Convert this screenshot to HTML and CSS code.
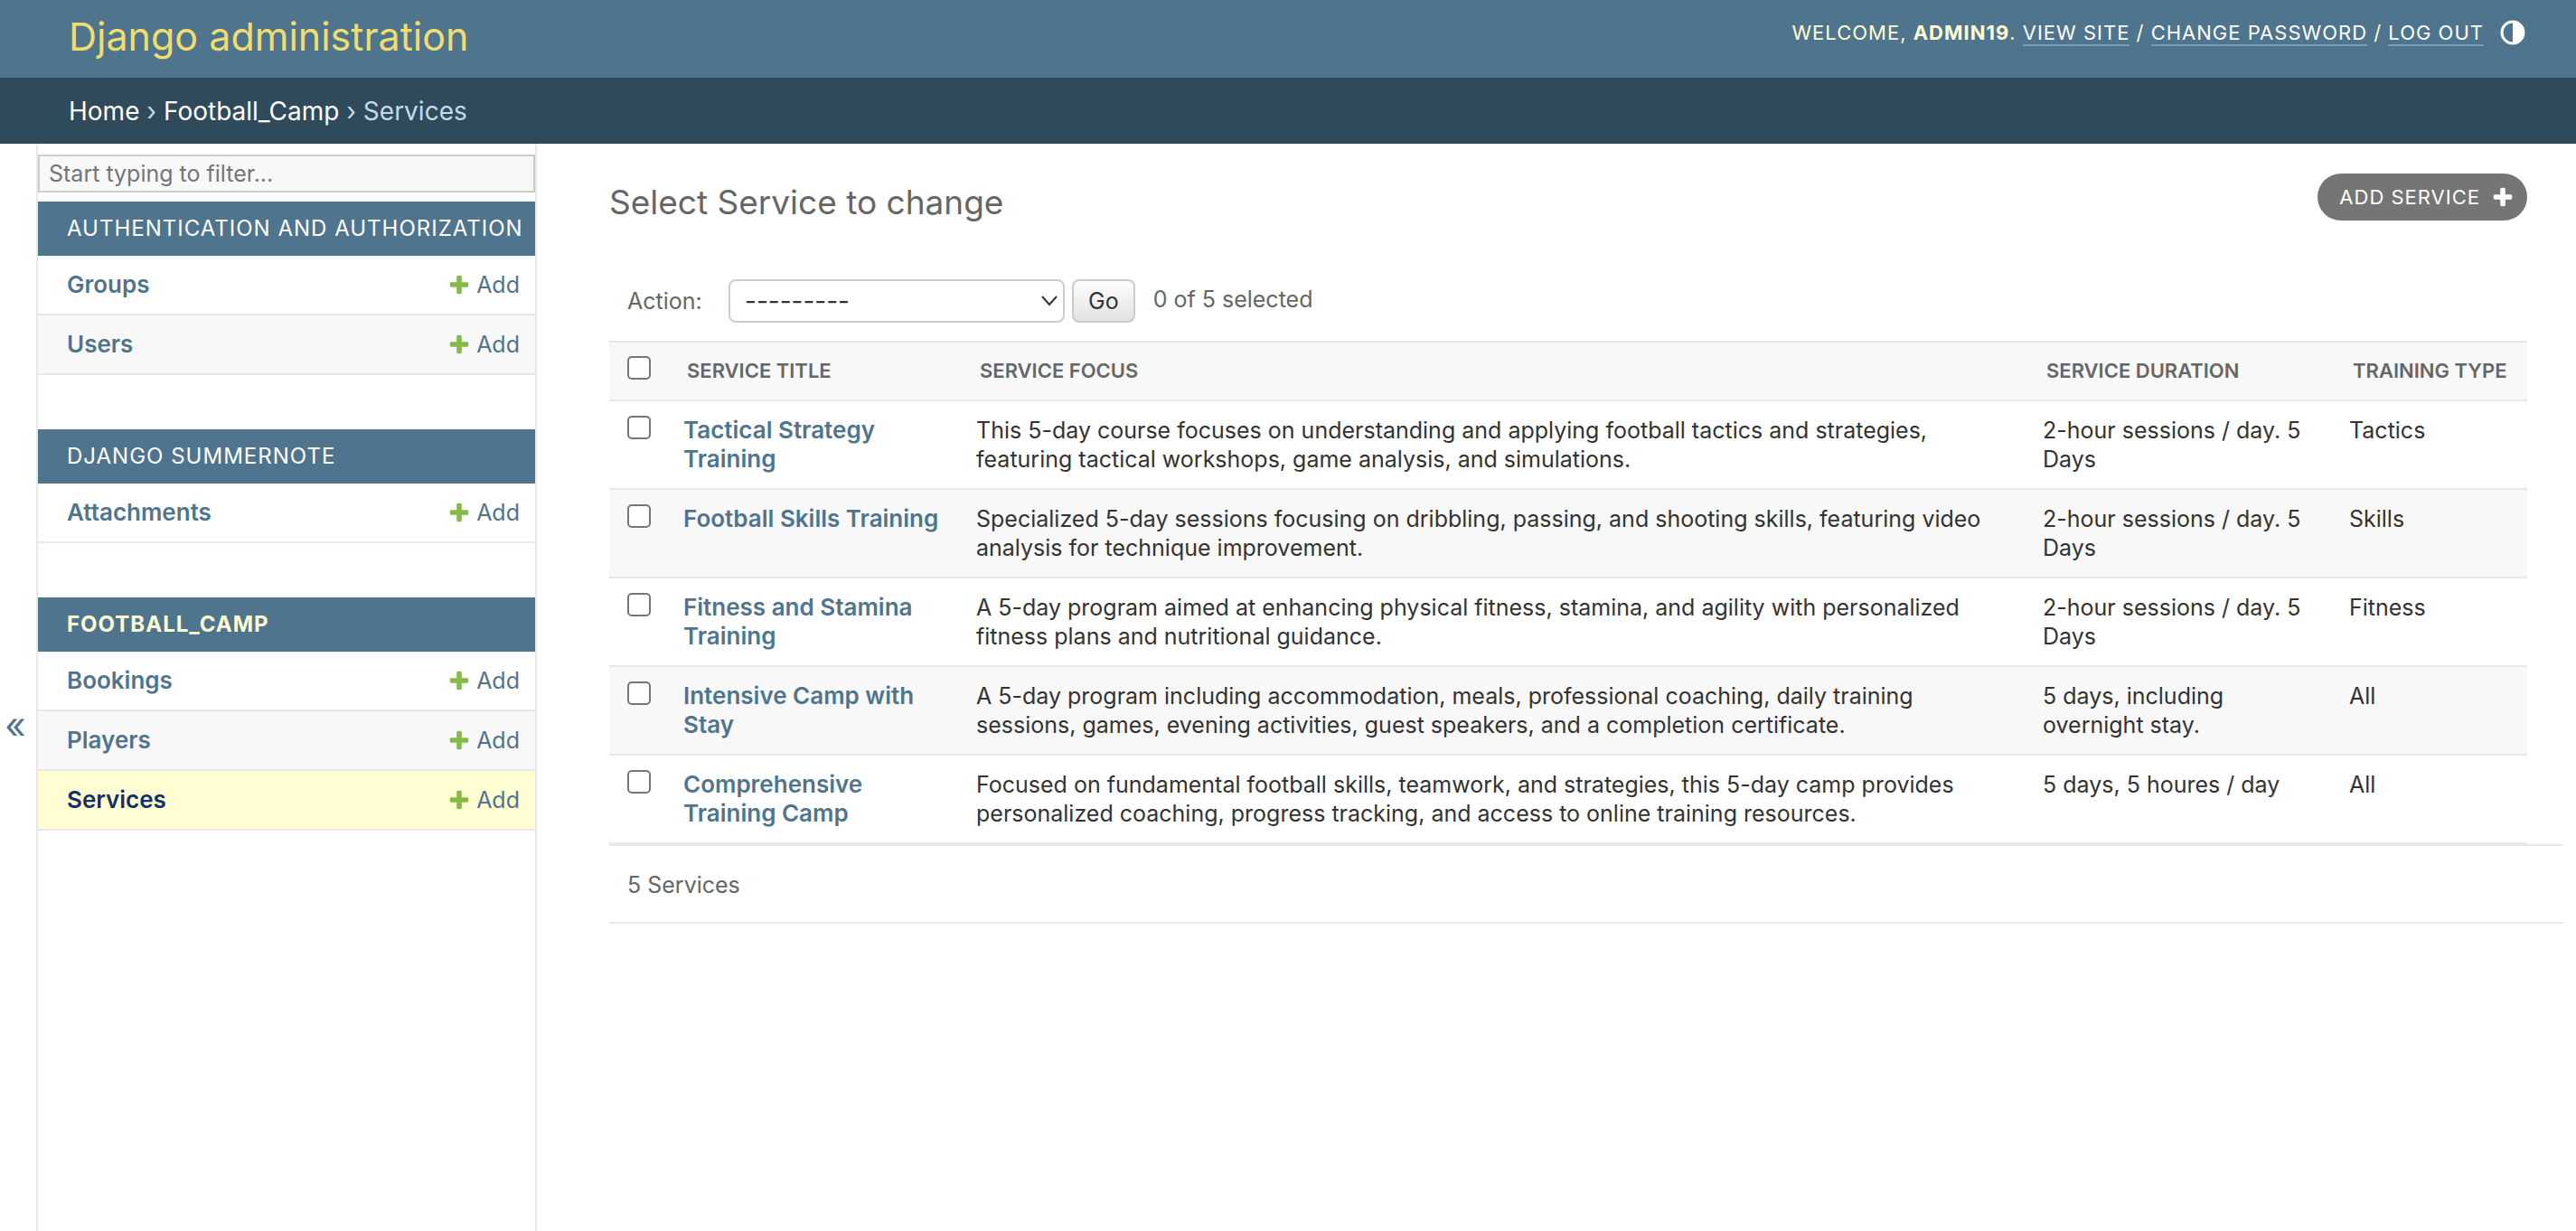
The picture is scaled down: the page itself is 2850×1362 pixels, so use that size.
FILE: index.html
```html
<!DOCTYPE html>
<html lang="en">
<head>
<meta charset="utf-8">
<meta name="viewport" content="width=device-width, initial-scale=1">
<title>Select Service to change | Django administration</title>
<link rel="stylesheet" href="styles.css">
</head>
<body>
<svg width="0" height="0" class="sprite" aria-hidden="true">
  <symbol id="plus" viewBox="0 0 1792 1792"><path d="M1600 796v192q0 40-28 68t-68 28h-416v416q0 40-28 68t-68 28h-192q-40 0-68-28t-28-68v-416h-416q-40 0-68-28t-28-68v-192q0-40 28-68t68-28h416v-416q0-40 28-68t68-28h192q40 0 68 28t28 68v416h416q40 0 68 28t28 68z"/></symbol>
</svg>

<header class="header">
  <div class="branding"><a href="#">Django administration</a></div>
  <div class="user-tools">
    <span>Welcome, <strong>admin19</strong>. <a href="#">View site</a> / <a href="#">Change password</a> / <a href="#">Log out</a></span>
    <button type="button" class="theme-toggle" aria-label="Toggle theme">
      <svg viewBox="0 0 28 28"><circle cx="14" cy="14" r="12" fill="none" stroke="currentColor" stroke-width="3"/><path d="M14 2a12 12 0 0 1 0 24z" fill="currentColor"/></svg>
    </button>
  </div>
</header>

<nav class="breadcrumbs" aria-label="Breadcrumbs"><a href="#">Home</a> › <a href="#">Football_Camp</a> › Services</nav>

<div class="main">
  <button type="button" class="nav-toggle" aria-label="Toggle navigation">«</button>

  <nav class="sidebar" aria-label="Sidebar">
    <input type="search" class="nav-filter" placeholder="Start typing to filter..." aria-label="Filter navigation items">

    <section class="module">
      <h2><a href="#">Authentication and Authorization</a></h2>
      <ul>
        <li><a class="model" href="#">Groups</a><a class="add" href="#"><svg><use href="#plus"/></svg>Add</a></li>
        <li><a class="model" href="#">Users</a><a class="add" href="#"><svg><use href="#plus"/></svg>Add</a></li>
      </ul>
    </section>

    <section class="module">
      <h2><a href="#">Django Summernote</a></h2>
      <ul>
        <li><a class="model" href="#">Attachments</a><a class="add" href="#"><svg><use href="#plus"/></svg>Add</a></li>
      </ul>
    </section>

    <section class="module current-app">
      <h2><a href="#">Football_Camp</a></h2>
      <ul>
        <li><a class="model" href="#">Bookings</a><a class="add" href="#"><svg><use href="#plus"/></svg>Add</a></li>
        <li><a class="model" href="#">Players</a><a class="add" href="#"><svg><use href="#plus"/></svg>Add</a></li>
        <li class="current-model"><a class="model" href="#">Services</a><a class="add" href="#"><svg><use href="#plus"/></svg>Add</a></li>
      </ul>
    </section>
  </nav>

  <main class="content">
    <div class="title-row">
      <h1>Select Service to change</h1>
      <a class="add-button" href="#">Add Service<svg><use href="#plus"/></svg></a>
    </div>

    <form class="changelist">
      <div class="actions">
        <label for="action">Action:</label>
        <span class="select">
          <select id="action"><option>---------</option><option>Delete selected Services</option></select>
          <svg viewBox="0 0 18 12"><path d="M1 1l8 9 8-9" fill="none" stroke="currentColor" stroke-width="2"/></svg>
        </span>
        <button type="button" class="go">Go</button>
        <span class="counter">0 of 5 selected</span>
      </div>

      <table>
        <colgroup><col class="c-check"><col class="c-title"><col><col class="c-duration"><col class="c-type"></colgroup>
        <thead>
          <tr>
            <th class="check"><input type="checkbox" aria-label="Select all services"></th>
            <th>Service title</th><th>Service focus</th><th>Service duration</th><th>Training type</th>
          </tr>
        </thead>
        <tbody>
          <tr>
            <td class="check"><input type="checkbox" aria-label="Select Tactical Strategy Training"></td>
            <th scope="row"><a href="#">Tactical Strategy Training</a></th>
            <td>This 5-day course focuses on understanding and applying football tactics and strategies, featuring tactical workshops, game analysis, and simulations.</td>
            <td>2-hour sessions / day. 5 Days</td>
            <td>Tactics</td>
          </tr>
          <tr>
            <td class="check"><input type="checkbox" aria-label="Select Football Skills Training"></td>
            <th scope="row"><a href="#">Football Skills Training</a></th>
            <td>Specialized 5-day sessions focusing on dribbling, passing, and shooting skills, featuring video analysis for technique improvement.</td>
            <td>2-hour sessions / day. 5 Days</td>
            <td>Skills</td>
          </tr>
          <tr>
            <td class="check"><input type="checkbox" aria-label="Select Fitness and Stamina Training"></td>
            <th scope="row"><a href="#">Fitness and Stamina Training</a></th>
            <td>A 5-day program aimed at enhancing physical fitness, stamina, and agility with personalized fitness plans and nutritional guidance.</td>
            <td>2-hour sessions / day. 5 Days</td>
            <td>Fitness</td>
          </tr>
          <tr>
            <td class="check"><input type="checkbox" aria-label="Select Intensive Camp with Stay"></td>
            <th scope="row"><a href="#">Intensive Camp with Stay</a></th>
            <td>A 5-day program including accommodation, meals, professional coaching, daily training sessions, games, evening activities, guest speakers, and a completion certificate.</td>
            <td>5 days, including overnight stay.</td>
            <td>All</td>
          </tr>
          <tr>
            <td class="check"><input type="checkbox" aria-label="Select Comprehensive Training Camp"></td>
            <th scope="row"><a href="#">Comprehensive Training Camp</a></th>
            <td>Focused on fundamental football skills, teamwork, and strategies, this 5-day camp provides personalized coaching, progress tracking, and access to online training resources.</td>
            <td>5 days, 5 houres / day</td>
            <td>All</td>
          </tr>
        </tbody>
      </table>

      <p class="paginator">5 Services</p>
    </form>
  </main>
</div>
</body>
</html>
```

FILE: styles.css
```css
:root {
  --primary: #4f748e;
  --secondary: #2f4a5b;
  --accent: #f0dd6f;
  --pale: #fffed2;
  --hairline: #e8e8e8;
  --border: #ccc;
  --quiet: #666;
  --darkened: #f8f8f8;
  --green: #84bb47;
}

* { box-sizing: border-box; }

body {
  margin: 0;
  min-height: 100vh;
  display: flex;
  flex-direction: column;
  background: #fff;
  color: #333;
  font: 25px/32px Inter, "Liberation Sans", sans-serif;
}

a { color: var(--primary); text-decoration: none; }
button, input, select { font: inherit; }
button { border: 0; padding: 0; background: none; cursor: pointer; }
.sprite { position: absolute; }

.header {
  display: flex;
  justify-content: space-between;
  height: 86px;
  padding: 10px 56px 0 76px;
  background: var(--primary);
}
.branding { font-size: 43px; line-height: 60px; }
.branding a { color: var(--accent); }
.user-tools {
  display: flex;
  align-items: center;
  gap: 18px;
  height: 52px;
  color: var(--pale);
  font-size: 22px;
  letter-spacing: 1px;
  text-transform: uppercase;
}
.user-tools a { color: #fff; border-bottom: 2px solid #7f9bae; }
.theme-toggle { color: #fff; width: 28px; height: 28px; }
.theme-toggle svg { display: block; width: 28px; height: 28px; }

.breadcrumbs {
  padding: 21px 76px 20px;
  background: var(--secondary);
  color: #c4dbe8;
  font-size: 28px;
}
.breadcrumbs a { color: #fff; }

.main { flex: 1; display: flex; align-items: stretch; }

.nav-toggle {
  flex: 0 0 42px;
  padding: 84px 6px 0 0;
  border-right: 2px solid var(--hairline);
  color: var(--primary);
  font-size: 40px;
}

.sidebar {
  flex: 0 0 552px;
  padding-top: 12px;
  border-right: 2px solid var(--hairline);
}
.nav-filter {
  display: block;
  width: 100%;
  height: 42px;
  margin-bottom: 10px;
  padding: 0 10px;
  border: 2px solid var(--border);
  border-radius: 0;
  background: var(--darkened);
  appearance: none;
  outline: none;
}
.nav-filter::placeholder { color: #757575; opacity: 1; }

.module { margin-bottom: 60px; }
.module h2 {
  margin: 0;
  padding: 14px 12px 14px 32px;
  background: var(--primary);
  font-size: 24px;
  font-weight: 400;
  letter-spacing: 1px;
  text-transform: uppercase;
  white-space: nowrap;
}
.module h2 a { color: #fff; }
.current-app h2 { font-weight: 700; }
.current-app h2 a { color: var(--pale); }
.module ul { margin: 0; padding: 0; list-style: none; }
.module li {
  display: flex;
  justify-content: space-between;
  padding: 16px 17px 16px 32px;
  border-bottom: 2px solid var(--hairline);
}
.module li:nth-child(even) { background: var(--darkened); }
.module .current-model { background: #fffed2; }
.model { font-size: 26px; font-weight: 600; }
.current-model .model { color: #123163; }
.add { display: flex; align-items: center; gap: 6px; }
.add svg { width: 26px; height: 26px; fill: var(--green); }

.content {
  flex: 1;
  min-width: 0;
  padding: 33px 14px 0 80px;
}
.title-row {
  display: flex;
  justify-content: space-between;
  align-items: flex-start;
  height: 100px;
  padding-right: 40px;
}
h1 {
  margin: 0;
  padding-top: 6px;
  color: var(--quiet);
  font-size: 37px;
  line-height: 52px;
  font-weight: 400;
}
.add-button {
  display: flex;
  align-items: center;
  gap: 12px;
  height: 52px;
  padding: 0 14px 0 24px;
  border-radius: 26px;
  background: #757575;
  color: #fff;
  font-size: 22px;
  letter-spacing: 1px;
  text-transform: uppercase;
}
.add-button svg { width: 26px; height: 26px; fill: #fff; }

.actions {
  display: flex;
  align-items: center;
  height: 85px;
  padding: 0 20px 3px;
  color: var(--quiet);
}
.actions label { width: 112px; }
.select { display: grid; align-items: center; width: 372px; color: #333; }
.select select, .select svg { grid-area: 1 / 1; }
.select select {
  width: 100%;
  height: 48px;
  padding: 0 16px;
  border: 2px solid var(--border);
  border-radius: 8px;
  background: #fff;
  color: inherit;
  font-size: 28px;
  appearance: none;
}
.select svg { justify-self: end; width: 18px; height: 12px; margin-right: 8px; pointer-events: none; }
.go {
  height: 48px;
  margin: 0 20px 0 8px;
  padding: 0 16px;
  border: 2px solid var(--border);
  border-radius: 8px;
  background: linear-gradient(#fdfdfd, #e2e2e2);
  color: #333;
}
.counter { padding-bottom: 4px; }

table {
  width: calc(100% - 40px);
  border-collapse: separate;
  border-spacing: 0;
  table-layout: fixed;
}
.c-check { width: 66px; }
.c-title { width: 324px; }
.c-duration { width: 339px; }
.c-type { width: 213px; }
th, td {
  padding: 16px;
  border-bottom: 2px solid var(--hairline);
  text-align: left;
  vertical-align: top;
}
tbody th { font-size: 26px; font-weight: 600; }
thead th {
  padding: 15px 20px 16px;
  border-top: 2px solid var(--hairline);
  background: var(--darkened);
  color: var(--quiet);
  font-size: 22px;
  font-weight: 600;
  text-transform: uppercase;
  white-space: nowrap;
}
tbody tr:nth-child(even) > * { background: var(--darkened); }
.check { padding-left: 20px; padding-right: 0; }
input[type="checkbox"] {
  display: block;
  width: 26px;
  height: 26px;
  margin: 0;
  border: 2px solid #767676;
  border-radius: 5px;
  background: #fff;
  appearance: none;
}

.paginator {
  margin: 0;
  padding: 27px 20px 25px;
  border-top: 2px solid var(--hairline);
  border-bottom: 2px solid var(--hairline);
  color: var(--quiet);
}
```
